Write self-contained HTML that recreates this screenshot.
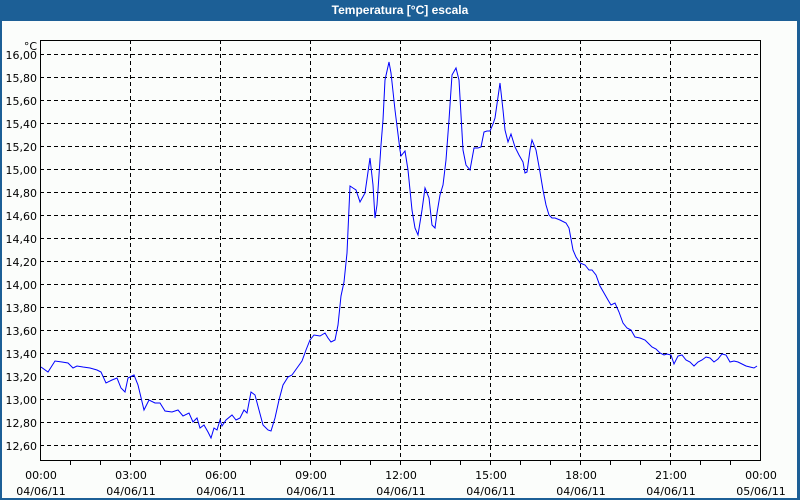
<!DOCTYPE html>
<html><head><meta charset="utf-8"><style>
html,body{margin:0;padding:0;width:800px;height:500px;overflow:hidden;background:#1c5f96}
#w{position:absolute;left:2px;top:21px;width:795px;height:477px;background:#fbfdfb}
#t{position:absolute;left:0;top:0;width:800px;height:21px;text-align:center;color:#fff;font:bold 12px "Liberation Sans",sans-serif;line-height:20px}
svg{position:absolute;left:0;top:0}
text{font-family:"DejaVu Sans","Liberation Sans",sans-serif;font-size:11px;fill:#000}
</style></head><body>
<div id="t">Temperatura [°C] escala</div>
<div id="w"></div>
<svg width="800" height="500">
<g stroke="#000" stroke-width="1" stroke-dasharray="4,3" shape-rendering="crispEdges">
<line x1="40" x2="760" y1="54.5" y2="54.5"/><line x1="40" x2="760" y1="77.5" y2="77.5"/><line x1="40" x2="760" y1="100.5" y2="100.5"/><line x1="40" x2="760" y1="123.5" y2="123.5"/><line x1="40" x2="760" y1="146.5" y2="146.5"/><line x1="40" x2="760" y1="169.5" y2="169.5"/><line x1="40" x2="760" y1="192.5" y2="192.5"/><line x1="40" x2="760" y1="215.5" y2="215.5"/><line x1="40" x2="760" y1="238.5" y2="238.5"/><line x1="40" x2="760" y1="261.5" y2="261.5"/><line x1="40" x2="760" y1="284.5" y2="284.5"/><line x1="40" x2="760" y1="307.5" y2="307.5"/><line x1="40" x2="760" y1="330.5" y2="330.5"/><line x1="40" x2="760" y1="353.5" y2="353.5"/><line x1="40" x2="760" y1="376.5" y2="376.5"/><line x1="40" x2="760" y1="399.5" y2="399.5"/><line x1="40" x2="760" y1="422.5" y2="422.5"/><line x1="40" x2="760" y1="445.5" y2="445.5"/>
<line x1="130.5" x2="130.5" y1="40" y2="461"/><line x1="220.5" x2="220.5" y1="40" y2="461"/><line x1="310.5" x2="310.5" y1="40" y2="461"/><line x1="400.5" x2="400.5" y1="40" y2="461"/><line x1="490.5" x2="490.5" y1="40" y2="461"/><line x1="580.5" x2="580.5" y1="40" y2="461"/><line x1="670.5" x2="670.5" y1="40" y2="461"/>
</g>
<rect x="40.5" y="40.5" width="720" height="420" fill="none" stroke="#000" shape-rendering="crispEdges"/>
<g stroke="#000" shape-rendering="crispEdges">
<path d="M70.5 461v4M100.5 461v4M130.5 461v4M160.5 461v4M190.5 461v4M220.5 461v4M250.5 461v4M280.5 461v4M310.5 461v4M340.5 461v4M370.5 461v4M400.5 461v4M430.5 461v4M460.5 461v4M490.5 461v4M520.5 461v4M550.5 461v4M580.5 461v4M610.5 461v4M640.5 461v4M670.5 461v4M700.5 461v4M730.5 461v4"/>
</g>
<polyline fill="none" stroke="#0000ff" stroke-width="1" points="41,367 48,372 55,361 62,362 68,363 73,368 77,366 83,367 90,368 97,370 101,372 106,383 112,380 117,378 121,388 125,392 128,378 134,375 138,385 144,410 149,400 155,403 160,403 165,411 172,412 178,410 183,416 189,413 193,422 197,418 200,428 204,425 208,432 211,438 214,428 217,430 220,420 222,426 226,420 232,415 236,420 240,418 244,410 247,413 251,392 255,395 259,410 263,425 268,430 271,431 275,418 279,400 283,385 288,377 292,375 297,368 302,361 306,350 310,340 314,335 320,336 325,333 328,338 331,342 335,340 338,325 341,296 344,282 347,253 350,186 353,188 356,190 360,202 365,193 370,158 373,185 375,218 377,205 381,145 383,120 385,80 389,62 391,73 395,110 400,150 401,156 405,151 408,170 412,210 415,228 418,235 422,210 425,188 429,198 432,225 435,228 437,213 440,195 443,185 446,160 449,120 452,75 456,68 459,80 463,150 466,165 470,170 474,148 478,148 481,147 484,132 487,131 490,131 493,124 495,118 498,97 500,83 503,110 505,130 508,142 511,134 515,147 519,155 523,162 525,173 527,172 530,150 532,140 536,150 540,172 543,190 546,205 549,215 552,218 555,218 560,220 566,223 569,228 573,250 576,257 580,263 585,265 589,270 592,270 596,275 600,286 604,293 608,300 611,305 615,303 619,312 623,323 627,328 631,330 635,337 640,338 645,340 648,343 652,347 656,349 660,353 664,355 667,354 671,355 674,364 678,356 682,355 686,360 690,362 694,366 698,362 702,360 706,357 710,358 714,362 718,359 722,354 726,355 730,362 734,361 738,362 742,364 746,366 750,367 754,368 757,366"/>
<g text-anchor="end">
<text x="37" y="50">°C</text>
<text x="37" y="59">16,00</text><text x="37" y="82">15,80</text><text x="37" y="105">15,60</text><text x="37" y="128">15,40</text><text x="37" y="151">15,20</text><text x="37" y="174">15,00</text><text x="37" y="197">14,80</text><text x="37" y="220">14,60</text><text x="37" y="243">14,40</text><text x="37" y="266">14,20</text><text x="37" y="289">14,00</text><text x="37" y="312">13,80</text><text x="37" y="335">13,60</text><text x="37" y="358">13,40</text><text x="37" y="381">13,20</text><text x="37" y="404">13,00</text><text x="37" y="427">12,80</text><text x="37" y="450">12,60</text>
</g>
<g text-anchor="middle">
<text x="41" y="479">00:00</text><text x="41" y="495">04/06/11</text>
<text x="131" y="479">03:00</text><text x="131" y="495">04/06/11</text>
<text x="221" y="479">06:00</text><text x="221" y="495">04/06/11</text>
<text x="311" y="479">09:00</text><text x="311" y="495">04/06/11</text>
<text x="401" y="479">12:00</text><text x="401" y="495">04/06/11</text>
<text x="491" y="479">15:00</text><text x="491" y="495">04/06/11</text>
<text x="581" y="479">18:00</text><text x="581" y="495">04/06/11</text>
<text x="671" y="479">21:00</text><text x="671" y="495">04/06/11</text>
<text x="761" y="479">00:00</text><text x="761" y="495">05/06/11</text>
</g>
</svg>
</body></html>
